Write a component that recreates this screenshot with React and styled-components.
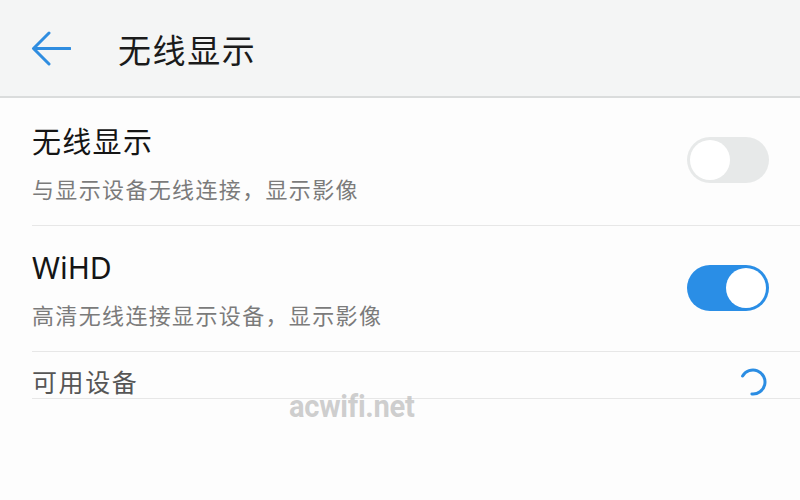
import React from "react";
import styled, { createGlobalStyle } from "styled-components";

const Global = createGlobalStyle`
  html, body { margin: 0; padding: 0; background: #fdfdfd; }
  body { font-family: "Noto Sans", "Noto Sans CJK SC", sans-serif; }
  #root { width: 800px; height: 500px; overflow: hidden; }
`;

const Page = styled.div`
  position: relative;
  width: 800px;
  height: 500px;
  background: #fdfdfd;
`;

const Header = styled.header`
  height: 96px;
  display: flex;
  align-items: center;
  padding-left: 31px;
  gap: 47px;
  background: #f4f5f5;
  border-bottom: 2px solid #dadcdc;
  box-sizing: content-box;
`;

const BackButton = styled.svg`
  width: 40px;
  height: 36px;
  margin-top: 2px;
  flex: none;
`;

const HeaderTitle = styled.h1`
  margin: 0;
  font-family: "Noto Sans CJK SC", sans-serif;
  font-size: 33px;
  font-weight: 400;
  letter-spacing: 1.6px;
  color: #1b1b1b;
  line-height: 40px;
  margin-top: 2px;
`;

const List = styled.div`
  display: flex;
  flex-direction: column;
  padding-left: 32px;
`;

const Row = styled.div`
  display: flex;
  align-items: ${(p) => (p.$compact ? "flex-start" : "center")};
  justify-content: space-between;
  height: ${(p) => p.$h}px;
  padding-right: 31px;
  border-bottom: 1px solid #e7e7e7;
  box-sizing: border-box;
`;

const TextCol = styled.div`
  display: flex;
  flex-direction: column;
  align-self: flex-start;
  padding-top: ${(p) => p.$top}px;
`;

const Title = styled.div`
  font-family: "Noto Sans", "Noto Sans CJK SC", sans-serif;
  font-size: ${(p) => (p.$latin ? 30 : 29)}px;
  letter-spacing: ${(p) => (p.$latin ? 0 : 1.3)}px;
  line-height: 34px;
  color: #151515;
`;

const Subtitle = styled.div`
  font-family: "Noto Sans CJK SC", sans-serif;
  font-size: 22px;
  letter-spacing: 1.35px;
  line-height: 30px;
  margin-top: 14px;
  color: #7b7b7b;
`;

const SectionLabel = styled.div`
  font-family: "Noto Sans CJK SC", sans-serif;
  font-size: 25px;
  letter-spacing: 1.6px;
  line-height: 28px;
  padding-top: 15px;
  color: #565656;
`;

const Track = styled.div`
  position: relative;
  width: 82px;
  height: 46px;
  border-radius: 23px;
  background: ${(p) => (p.$on ? "#2a8ee6" : "#e7e9e9")};
  flex: none;
  margin-top: ${(p) => (p.$on ? "-2px" : "-4px")};
`;

const Knob = styled.div`
  position: absolute;
  top: 3px;
  left: ${(p) => (p.$on ? "39px" : "3px")};
  width: 40px;
  height: 40px;
  border-radius: 50%;
  background: #ffffff;
`;

const Spinner = styled.svg`
  width: 28px;
  height: 28px;
  margin-top: 16px;
  margin-right: 2px;
  flex: none;
`;

const Watermark = styled.div`
  position: absolute;
  left: 289px;
  top: 388px;
  font-family: "Liberation Sans Narrow", "Roboto", sans-serif;
  font-weight: 700;
  font-size: 31px;
  letter-spacing: -0.3px;
  color: rgba(185, 185, 185, 0.7);
  transform: scaleX(0.94);
  transform-origin: left center;
  pointer-events: none;
`;

function Toggle({ on }) {
  return (
    <Track $on={on}>
      <Knob $on={on} />
    </Track>
  );
}

export default function App() {
  return (
    <Page>
      <Global />
      <Header>
        <BackButton viewBox="0 0 40 36" fill="none">
          <path
            d="M39 17.5H3M18 2L2.5 17.5L18 33"
            stroke="#2f8de0"
            strokeWidth="3"
            strokeLinecap="round"
            strokeLinejoin="round"
          />
        </BackButton>
        <HeaderTitle>无线显示</HeaderTitle>
      </Header>
      <List>
        <Row $h={128}>
          <TextCol $top={27}>
            <Title>无线显示</Title>
            <Subtitle>与显示设备无线连接，显示影像</Subtitle>
          </TextCol>
          <Toggle on={false} />
        </Row>
        <Row $h={126}>
          <TextCol $top={25}>
            <Title $latin>WiHD</Title>
            <Subtitle>高清无线连接显示设备，显示影像</Subtitle>
          </TextCol>
          <Toggle on={true} />
        </Row>
        <Row $h={47} $compact>
          <SectionLabel>可用设备</SectionLabel>
          <Spinner viewBox="0 0 28 28" fill="none">
            <path
              d="M3.6 8 A12 12 0 1 1 12.9 25.95"
              stroke="#2b8de3"
              strokeWidth="3"
              strokeLinecap="round"
            />
          </Spinner>
        </Row>
      </List>
      <Watermark>acwifi.net</Watermark>
    </Page>
  );
}
